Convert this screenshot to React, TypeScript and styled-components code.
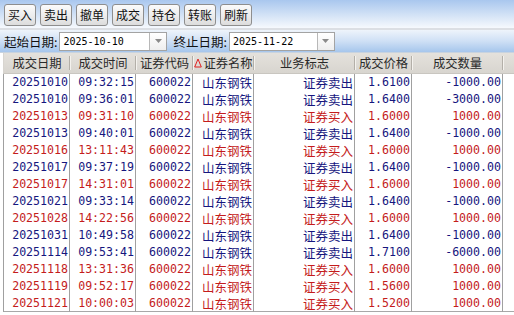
import React from "react";
import styled, { createGlobalStyle } from "styled-components";

const GlobalStyle = createGlobalStyle`
  html, body { margin: 0; padding: 0; background: #ffffff; }
  body { font-family: "Noto Sans CJK SC", "Noto Sans", sans-serif; }
  * { box-sizing: border-box; }
`;

const COLS = [66, 66, 57, 61, 101, 57, 91];
const TEMPLATE = `${COLS.map((c) => `${c}px`).join(" ")} 1fr`;

const Page = styled.div`
  width: 514px;
  height: 315px;
  overflow: hidden;
  background: #ffffff;
  display: flex;
  flex-direction: column;
`;

const Toolbar = styled.div`
  height: 28px;
  flex: none;
  display: flex;
  align-items: flex-start;
  gap: 4px;
  padding: 4px 0 0 4px;
  background: linear-gradient(to bottom, #a9c7ee 0%, #d4e3f6 55%, #f6f9fd 100%);
`;

const ToolButton = styled.button`
  width: 32px;
  height: 22px;
  padding: 0;
  border: 1px solid #8e8e8e;
  border-radius: 3px;
  background: linear-gradient(to bottom, #fbfbfb 0%, #ececec 55%, #dcdcdc 100%);
  font-family: "Noto Sans CJK SC", sans-serif;
  font-size: 12px;
  line-height: 20px;
  color: #111;
  cursor: pointer;
`;

const Divider = styled.div`
  height: 2px;
  flex: none;
  background: #dcdfe4;
`;

const DateBar = styled.div`
  height: 22px;
  flex: none;
  display: flex;
  align-items: center;
  padding-left: 4px;
  background: linear-gradient(to bottom, #eef4fb 0%, #cfe0f5 50%, #a6c6ec 100%);
`;

const Label = styled.span<{ $gap?: number }>`
  font-size: 12.5px;
  color: #111;
  margin-left: ${(p) => p.$gap ?? 0}px;
  white-space: nowrap;
  line-height: 19px;
`;

const DateBox = styled.div<{ $w: number }>`
  width: ${(p) => p.$w}px;
  height: 19px;
  margin-left: 2px;
  display: flex;
  background: #ffffff;
  border: 1px solid #a3a3a3;
`;

const DateText = styled.span`
  flex: 1;
  font-family: "DejaVu Sans Mono", monospace;
  font-size: 10px;
  line-height: 17px;
  padding-left: 3px;
  color: #000;
`;

const DropBtn = styled.div`
  width: 17px;
  height: 17px;
  border-left: 1px solid #b8b8b8;
  background: linear-gradient(to bottom, #ffffff, #eeeeee);
  display: flex;
  align-items: center;
  justify-content: center;
`;

const HeaderBand = styled.div`
  height: 1px;
  flex: none;
  background: #c8d3df;
`;

const HeaderRow = styled.div`
  height: 21px;
  flex: none;
  display: grid;
  grid-template-columns: ${TEMPLATE};
  margin-left: 3px;
  border-left: 1px solid #d8d5d0;
  background: linear-gradient(to bottom, #e4e1dc, #d8d5cf);
  border-bottom: 1px solid #c9c6c0;
`;

const HeaderCell = styled.div`
  position: relative;
  display: flex;
  align-items: center;
  justify-content: center;
  gap: 1px;
  font-size: 12.3px;
  color: #2a2a2a;
  white-space: nowrap;
  &::after {
    content: "";
    position: absolute;
    right: 0;
    top: 3px;
    bottom: 3px;
    width: 1px;
    background: #b3afa8;
    box-shadow: 1px 0 0 #f4f2ee;
  }
`;

const HeaderFill = styled.div``;

const Body = styled.div`
  flex: none;
  margin-left: 3px;
  border-left: 1px solid #a0a0a0;
`;

const Row = styled.div<{ $buy: boolean }>`
  height: 17px;
  display: grid;
  grid-template-columns: ${TEMPLATE};
  color: ${(p) => (p.$buy ? "#c41c1c" : "#16167e")};
  &:last-child {
    border-bottom: 1px solid #a8a8a8;
  }
`;

const Cell = styled.div<{ $mono?: boolean }>`
  border-right: 1px solid #a0a0a0;
  text-align: right;
  padding-right: 1px;
  white-space: nowrap;
  font-family: ${(p) =>
    p.$mono ? '"DejaVu Sans Mono", monospace' : '"Noto Sans CJK SC", sans-serif'};
  font-size: ${(p) => (p.$mono ? "11.6px" : "12.5px")};
  line-height: 17px;
`;

const EndCell = styled.div``;

type Trade = [string, string, string, string, string, string, string, boolean];

const trades: Trade[] = [
  ["20251010", "09:32:15", "600022", "山东钢铁", "证券卖出", "1.6100", "-1000.00", false],
  ["20251010", "09:36:01", "600022", "山东钢铁", "证券卖出", "1.6400", "-3000.00", false],
  ["20251013", "09:31:10", "600022", "山东钢铁", "证券买入", "1.6000", "1000.00", true],
  ["20251013", "09:40:01", "600022", "山东钢铁", "证券卖出", "1.6400", "-1000.00", false],
  ["20251016", "13:11:43", "600022", "山东钢铁", "证券买入", "1.6000", "1000.00", true],
  ["20251017", "09:37:19", "600022", "山东钢铁", "证券卖出", "1.6400", "-1000.00", false],
  ["20251017", "14:31:01", "600022", "山东钢铁", "证券买入", "1.6000", "1000.00", true],
  ["20251021", "09:33:14", "600022", "山东钢铁", "证券卖出", "1.6400", "-1000.00", false],
  ["20251028", "14:22:56", "600022", "山东钢铁", "证券买入", "1.6000", "1000.00", true],
  ["20251031", "10:49:58", "600022", "山东钢铁", "证券卖出", "1.6400", "-1000.00", false],
  ["20251114", "09:53:41", "600022", "山东钢铁", "证券卖出", "1.7100", "-6000.00", false],
  ["20251118", "13:31:36", "600022", "山东钢铁", "证券买入", "1.6000", "1000.00", true],
  ["20251119", "09:52:17", "600022", "山东钢铁", "证券买入", "1.5600", "1000.00", true],
  ["20251121", "10:00:03", "600022", "山东钢铁", "证券买入", "1.5200", "1000.00", true],
];

const buttons = ["买入", "卖出", "撤单", "成交", "持仓", "转账", "刷新"];
const headers = ["成交日期", "成交时间", "证券代码", "证券名称", "业务标志", "成交价格", "成交数量"];
const mono = [true, true, true, false, false, true, true];

const DownArrow = () => (
  <svg width="7" height="4" viewBox="0 0 7 4">
    <path d="M0 0 L7 0 L3.5 4 Z" fill="#8a8a8a" />
  </svg>
);

const SortMark = () => (
  <svg width="8" height="10" viewBox="0 0 8 10">
    <path d="M4 1 L7.3 9 L0.7 9 Z" fill="none" stroke="#e02020" strokeWidth="1" />
  </svg>
);

export default function App() {
  return (
    <>
      <GlobalStyle />
      <Page>
        <Toolbar>
          {buttons.map((b) => (
            <ToolButton key={b}>{b}</ToolButton>
          ))}
        </Toolbar>
        <Divider />
        <DateBar>
          <Label>起始日期:</Label>
          <DateBox $w={108}>
            <DateText>2025-10-10</DateText>
            <DropBtn>
              <DownArrow />
            </DropBtn>
          </DateBox>
          <Label $gap={6}>终止日期:</Label>
          <DateBox $w={106}>
            <DateText>2025-11-22</DateText>
            <DropBtn>
              <DownArrow />
            </DropBtn>
          </DateBox>
        </DateBar>
        <HeaderBand />
        <HeaderRow>
          {headers.map((h, i) => (
            <HeaderCell key={h}>
              {i === 3 && <SortMark />}
              {h}
            </HeaderCell>
          ))}
          <HeaderFill />
        </HeaderRow>
        <Body>
          {trades.map((t, idx) => (
            <Row key={idx} $buy={t[7]}>
              {t.slice(0, 7).map((v, i) => (
                <Cell key={i} $mono={mono[i]}>
                  {v as string}
                </Cell>
              ))}
              <EndCell />
            </Row>
          ))}
        </Body>
      </Page>
    </>
  );
}
